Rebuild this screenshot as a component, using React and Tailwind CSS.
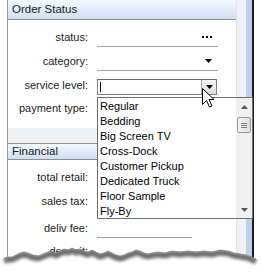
import React from 'react';

const options = [
  'Regular',
  'Bedding',
  'Big Screen TV',
  'Cross-Dock',
  'Customer Pickup',
  'Dedicated Truck',
  'Floor Sample',
  'Fly-By',
];

const tear = [
  [4, 258], [8, 257], [12, 257], [16, 255], [20, 253], [24, 252], [28, 253], [33, 255], [38, 256],
  [43, 254], [48, 252], [52, 251], [56, 253], [60, 251], [64, 249], [68, 250], [72, 248],
  [76, 250], [80, 249], [84, 251], [88, 252], [92, 250], [96, 252], [100, 254], [104, 253],
  [108, 251], [112, 253], [116, 255], [120, 256], [124, 255], [128, 253], [132, 252],
  [136, 250], [140, 251], [144, 253], [148, 254], [152, 253], [158, 252], [165, 253],
  [172, 251], [180, 252], [188, 251], [196, 252], [204, 251], [212, 252], [220, 250],
  [228, 251], [234, 253], [240, 254], [246, 255], [252, 257], [256, 259],
];

const tearLine = tear.map(([x, y]) => `${x},${y}`).join(' ');
const tearFill = `0,258 ${tearLine} 263,259 263,279 0,279`;

function DownArrow() {
  return (
    <svg width="7" height="4" viewBox="0 0 7 4">
      <path d="M0 0h7L3.5 4z" fill="#000" />
    </svg>
  );
}

function SectionHeader({ title, top }) {
  return (
    <div
      className={`flex items-center border-b border-[#8f8f8f] bg-gradient-to-b from-[#f4f8fd] to-[#cfdff1] pl-[4px] text-[11.5px] text-[#1a1a1a] ${
        top ? 'h-[20px]' : 'h-[17px] border-t'
      }`}
    >
      {title}
    </div>
  );
}

function Row({ label, className = '', children }) {
  return (
    <div className={`flex h-[19px] ${className}`}>
      <div className="flex w-[80px] items-center justify-end whitespace-nowrap">{label}</div>
      <div className="ml-[9px] flex">{children}</div>
    </div>
  );
}

function LineField({ width = 'w-[121px]', children }) {
  return (
    <div className={`flex h-[19px] ${width} items-center justify-end border-b border-[#a3a3a3] pr-[6px]`}>
      {children}
    </div>
  );
}

export default function App() {
  return (
    <div className="relative flex h-[279px] w-[263px] overflow-hidden bg-white font-['Liberation_Sans',Arial,sans-serif] text-[11px] text-[#1c1c1c]">
      <div className="ml-[7px] flex w-[229px] flex-col border-l border-[#9a9a9a]">
        <SectionHeader title="Order Status" top />

        <Row label="status:" className="mt-[8px]">
          <LineField>
            <div className="flex gap-[2px]">
              <span className="h-[2px] w-[2px] bg-black" />
              <span className="h-[2px] w-[2px] bg-black" />
              <span className="h-[2px] w-[2px] bg-black" />
            </div>
          </LineField>
        </Row>

        <Row label="category:" className="mt-[5px]">
          <LineField>
            <DownArrow />
          </LineField>
        </Row>

        <Row label="service level:" className="mt-[5px]">
          <div className="mt-[3px] flex h-[16px] w-[120px] items-stretch justify-between border border-[#828282] border-t-[#6a6a6a]">
            <span className="ml-[2px] mt-[2px] h-[10px] w-[1px] bg-black" />
            <div className="flex w-[15px] items-center justify-center border-l border-[#a8a8a8] bg-gradient-to-b from-[#f4f4f4] to-[#dadada]">
              <DownArrow />
            </div>
          </div>
        </Row>

        <Row label="payment type:" className="mt-[4px]" />

        <div className="mt-[10px] h-[15px] bg-[#eeeff1]" />

        <SectionHeader title="Financial" />

        <Row label="total retail:" className="mt-[8px]" />
        <Row label="sales tax:" className="mt-[5px]" />
        <Row label="deliv fee:" className="mt-[8px]">
          <LineField width="w-[95px]" />
        </Row>
        <Row label="deposit:" className="mt-[4px]" />
      </div>

      <div className="w-[10px] border-l border-[#dde4ec] bg-[#eff1f4]" />
      <div className="w-[6px] bg-[#b9d1ea]" />
      <div className="w-[2px] bg-[#1b1b1b]" />

      <div className="absolute left-[97px] top-[97px] flex h-[122px] w-[156px] border border-[#6e6e6e] bg-white text-black">
        <div className="flex-1 pt-[1px]">
          {options.map((o) => (
            <div key={o} className="h-[15px] whitespace-nowrap pl-[2px] leading-[15px]">
              {o}
            </div>
          ))}
        </div>
        <div className="flex w-[16px] flex-col bg-[#f0f0f0]">
          <div className="flex h-[17px] items-center justify-center">
            <svg width="7" height="4" viewBox="0 0 7 4">
              <path d="M0 4h7L3.5 0z" fill="#555" />
            </svg>
          </div>
          <div className="mx-[1px] mt-[2px] flex h-[16px] flex-col items-center justify-center gap-[1px] rounded-[2px] border border-[#979797] bg-gradient-to-r from-[#f4f4f4] to-[#dedede]">
            <span className="h-[1px] w-[6px] bg-[#7d7d7d]" />
            <span className="h-[1px] w-[6px] bg-[#7d7d7d]" />
            <span className="h-[1px] w-[6px] bg-[#7d7d7d]" />
          </div>
          <div className="flex-1" />
          <div className="flex h-[17px] items-center justify-center">
            <svg width="7" height="4" viewBox="0 0 7 4">
              <path d="M0 0h7L3.5 4z" fill="#555" />
            </svg>
          </div>
        </div>
      </div>

      <svg className="pointer-events-none absolute left-[202px] top-[88px]" width="13" height="20" viewBox="0 0 13 20">
        <path
          d="M0.5 0.5V16.5L4.5 12.5L7.5 19L10 18L7 11.5H12Z"
          fill="#fff"
          stroke="#000"
          strokeWidth="1"
        />
      </svg>

      <svg className="pointer-events-none absolute left-0 top-0" width="263" height="279" viewBox="0 0 263 279">
        <defs>
          <clipPath id="below">
            <polygon points={tearFill} />
          </clipPath>
          <filter id="soft" x="-10%" y="-50%" width="120%" height="200%">
            <feGaussianBlur stdDeviation="1.8" />
          </filter>
        </defs>
        <polygon points={tearFill} fill="#fff" />
        <g clipPath="url(#below)">
          <polyline
            points={tearLine}
            transform="translate(0 2.5)"
            fill="none"
            stroke="#4a4a4a"
            strokeWidth="6"
            opacity="0.8"
            filter="url(#soft)"
          />
        </g>
        <polyline points={tearLine} fill="none" stroke="#7c7c7c" strokeWidth="0.8" />
      </svg>
    </div>
  );
}
